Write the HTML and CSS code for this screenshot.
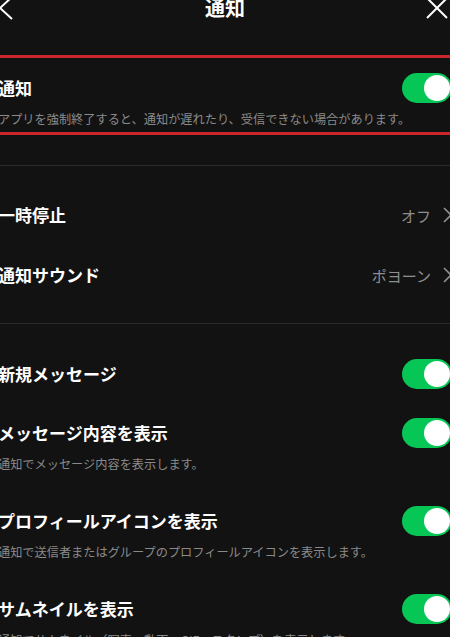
FILE: index.html
```html
<!DOCTYPE html>
<html>
<head>
    <meta charset="utf-8">
    <title>通知</title>
    <link rel="stylesheet" href="styles.css">
</head>
<body>
    <div class="screen">
        <header class="nav">
            <svg class="nav-back" width="16" height="24" viewBox="0 0 16 24">
                <polyline points="14,1 2,12 14,23" />
            </svg>
            <h1 class="nav-title">通知</h1>
            <svg class="nav-close" width="24" height="24" viewBox="0 0 24 24">
                <line x1="2" y1="2" x2="22" y2="22" />
                <line x1="22" y1="2" x2="2" y2="22" />
            </svg>
        </header>

        <section class="group highlight">
            <div class="item">
                <div class="item-head">
                    <span class="label">通知</span>
                    <span class="toggle"></span>
                </div>
                <p class="sub">アプリを強制終了すると、通知が遅れたり、受信できない場合があります。</p>
            </div>
        </section>

        <section class="group links">
            <div class="link-row">
                <span class="label">一時停止</span>
                <span class="value">オフ</span>
                <svg class="chevron" width="9" height="16" viewBox="0 0 9 16">
                    <polyline points="1,1 8,8 1,15" />
                </svg>
            </div>
            <div class="link-row">
                <span class="label">通知サウンド</span>
                <span class="value">ポヨーン</span>
                <svg class="chevron" width="9" height="16" viewBox="0 0 9 16">
                    <polyline points="1,1 8,8 1,15" />
                </svg>
            </div>
        </section>

        <section class="group switches">
            <div class="item">
                <div class="item-head">
                    <span class="label">新規メッセージ</span>
                    <span class="toggle"></span>
                </div>
            </div>
            <div class="item has-sub">
                <div class="item-head">
                    <span class="label">メッセージ内容を表示</span>
                    <span class="toggle"></span>
                </div>
                <p class="sub">通知でメッセージ内容を表示します。</p>
            </div>
            <div class="item has-sub">
                <div class="item-head">
                    <span class="label">プロフィールアイコンを表示</span>
                    <span class="toggle"></span>
                </div>
                <p class="sub">通知で送信者またはグループのプロフィールアイコンを表示します。</p>
            </div>
            <div class="item has-sub">
                <div class="item-head">
                    <span class="label">サムネイルを表示</span>
                    <span class="toggle"></span>
                </div>
                <p class="sub">通知でサムネイル（写真、動画、GIF、スタンプ）を表示します。</p>
            </div>
        </section>
    </div>
</body>
</html>
```

FILE: styles.css
```css
body {
    margin: 0;
    background: #121212;
    color: #ffffff;
    font-family: "Noto Sans CJK JP", "Noto Sans", sans-serif;
    overflow: hidden;
}
.screen {
    margin: 0 -2px;
}
.nav {
    display: grid;
    grid-template-columns: 1fr auto 1fr;
    align-items: center;
    height: 42px;
    margin-top: -13px;
}
.nav svg {
    fill: none;
    stroke: #ffffff;
    stroke-width: 2;
}
.nav-close {
    justify-self: end;
    margin-right: 3px;
}
.nav-title {
    margin: 0;
    font-size: 20px;
    font-weight: 700;
    line-height: 42px;
}
.group {
    border-top: 1px solid #2a2a2a;
}
.highlight {
    margin-top: 26px;
    border-top: 3px solid #cc262d;
    border-bottom: 3px solid #cc262d;
}
.links {
    margin-top: 30px;
    padding: 19px 0 18px;
}
.switches {
    padding-top: 20px;
}
.item {
    padding: 15px 0 14px;
}
.highlight .item {
    padding-bottom: 5px;
}
.item.has-sub {
    padding-bottom: 19px;
}
.item-head {
    display: flex;
    justify-content: space-between;
    align-items: center;
    height: 30px;
}
.label {
    font-size: 17px;
    font-weight: 700;
    line-height: 30px;
}
.sub {
    margin: 8px 0 0;
    font-size: 12.2px;
    line-height: 16px;
    color: #8a8a8a;
}
.toggle {
    display: flex;
    justify-content: flex-end;
    align-items: center;
    width: 50px;
    height: 30px;
    padding: 0 2px;
    box-sizing: border-box;
    border-radius: 15px;
    background: #06c755;
}
.toggle::after {
    content: "";
    width: 26px;
    height: 26px;
    border-radius: 50%;
    background: #ffffff;
}
.link-row {
    display: flex;
    align-items: center;
    height: 60px;
}
.link-row .label {
    flex: 1;
}
.value {
    font-size: 15px;
    color: #8e8e8e;
    margin-right: 12px;
}
.chevron {
    fill: none;
    stroke: #8e8e8e;
    stroke-width: 1.6;
}
```
